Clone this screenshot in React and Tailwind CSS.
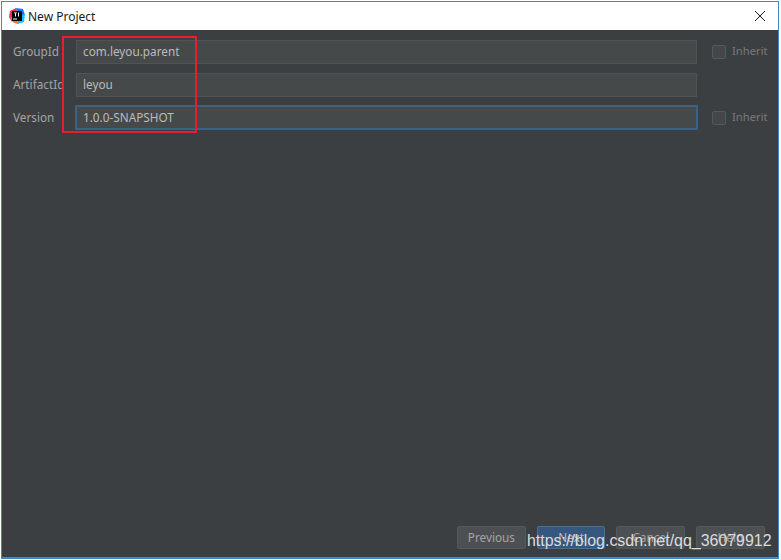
const font = "font-['Noto_Sans',sans-serif]"

function LogoIcon() {
  return (
    <svg width="16" height="16" viewBox="0 0 16 16" className="shrink-0">
      <path d="M1 3 L7 0 L9 6 L3 14 L0 9 Z" fill="#fe315d" />
      <path d="M7 0 L14 1 L16 7 L10 9 Z" fill="#087cfa" />
      <path d="M10 8 L16 6 L15 14 L8 16 Z" fill="#07c3f2" />
      <path d="M1 9 L5 15 L10 16 L6 9 Z" fill="#f97a12" />
      <rect x="3" y="3" width="10" height="10" fill="#000" />
      <rect x="4" y="10.5" width="4" height="1" fill="#fff" />
      <path d="M5 4.5 H8 V5.3 H7 V8.5 H6 V5.3 H5 Z M9 4.5 H10 V8.5 H9 Z" fill="#fff" />
    </svg>
  )
}

function Field({ label, value, focused, inherit }) {
  return (
    <div className="flex items-center h-[33px]">
      <div className="w-[63px] shrink-0 text-[11.75px] text-[#a2a4a6] whitespace-nowrap pt-px">{label}</div>
      <div
        className={
          focused
            ? 'w-[623px] h-[25px] shrink-0 -ml-px flex items-center pl-[6px] pt-px bg-[#45494a] border-2 border-[#3d6185] rounded-[1px] text-[11.75px] text-[#bbbbbb]'
            : 'w-[621px] h-[24px] shrink-0 flex items-center pl-[6px] pt-px bg-[#45494a] border border-[#505354] text-[11.75px] text-[#bbbbbb]'
        }
      >
        {value}
      </div>
      {inherit ? (
        <div className={focused ? 'flex items-center ml-[14px] shrink-0' : 'flex items-center ml-[15px] shrink-0'}>
          <div className="w-[14px] h-[14px] rounded-[2px] border border-[#55585a] bg-[#43474a]" />
          <span className="ml-[6px] text-[11.25px] text-[#77797b] leading-[14px] pb-px">Inherit</span>
        </div>
      ) : null}
    </div>
  )
}

function FooterButton({ children, primary }) {
  return (
    <button
      type="button"
      className={
        primary
          ? 'w-[68.67px] h-[23px] bg-[#365880] border border-[#4c708c] rounded-[2px] text-[11.75px] text-[#bbbbbb]'
          : 'w-[68.67px] h-[23px] bg-[#4c5052] border border-[#55585a] rounded-[2px] text-[11.75px] text-[#a2a4a6]'
      }
    >
      {children}
    </button>
  )
}

export default function App() {
  return (
    <div className={`${font} relative w-[781px] h-[560px] bg-white pt-px pl-px pr-[2px] pb-px overflow-hidden`}>
      <div className="flex flex-col h-full border border-[#3c8ac9] border-b-2">
        <div className="flex items-center h-[28px] bg-white pl-[7px] pr-[12px] shrink-0">
          <LogoIcon />
          <span className="ml-[3px] text-[12px] text-[#1a1a1a] pt-px">New Project</span>
          <svg width="12" height="12" viewBox="0 0 12 12" className="ml-auto" fill="none" stroke="#222" strokeWidth="1">
            <path d="M1 1 L11 11 M11 1 L1 11" />
          </svg>
        </div>
        <div className="flex-1 flex flex-col bg-[#3c3f41] pl-[11px] pt-[5px] pr-[13.33px] pb-[8px]">
          <Field label="GroupId" value="com.leyou.parent" inherit />
          <Field label="ArtifactId" value="leyou" />
          <Field label="Version" value="1.0.0-SNAPSHOT" focused inherit />
          <div className="mt-auto flex justify-end gap-[11px]">
            <FooterButton>Previous</FooterButton>
            <FooterButton primary>Next</FooterButton>
            <FooterButton>Cancel</FooterButton>
            <FooterButton>Help</FooterButton>
          </div>
        </div>
      </div>
      {/* annotation drawn over the screenshot */}
      <div className="absolute left-[62px] top-[36px] w-[135px] h-[97px] border-2 border-[#e5202b]" />
      {/* blog watermark */}
      <div className="absolute left-[527px] top-[530px] text-[15.95px] leading-[22px] text-[#dcdcdc] whitespace-nowrap font-['Liberation_Sans',sans-serif]">
        https://blog.csdn.net/qq_36079912
      </div>
    </div>
  )
}
